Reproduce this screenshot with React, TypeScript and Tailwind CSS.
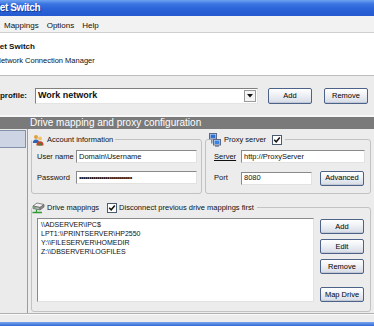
import React from "react";

function AccountIcon() {
  return (
    <svg width="12" height="12" viewBox="0 0 12 12" className="shrink-0">
      <circle cx="4" cy="3" r="2" fill="#e0a040" />
      <path d="M0.8 9 Q0.8 5.4 4 5.4 Q7.2 5.4 7.2 9Z" fill="#2f63b8" />
      <circle cx="8" cy="4.6" r="2" fill="#f2c46a" />
      <path d="M4.4 11.6 Q4.4 7.2 8 7.2 Q11.6 7.2 11.6 11.6Z" fill="#c8402c" />
      <path d="M6 11.6 L8 8.2 L10 11.6Z" fill="#3d8a3a" />
    </svg>
  );
}

function ProxyIcon() {
  return (
    <svg width="12" height="14" viewBox="0 0 12 14" className="shrink-0">
      <rect x="0.5" y="0.5" width="7" height="5.5" fill="#dfe6f2" stroke="#5a6a86" strokeWidth="1" />
      <rect x="1.5" y="1.5" width="5" height="3.5" fill="#2f6fd0" />
      <rect x="4.5" y="6.5" width="7" height="5.5" fill="#dfe6f2" stroke="#5a6a86" strokeWidth="1" />
      <rect x="5.5" y="7.5" width="5" height="3.5" fill="#3b82e6" />
      <rect x="6" y="12.3" width="4" height="1.4" fill="#6a7890" />
      <rect x="2" y="6.5" width="1.5" height="4" fill="#7a88a0" />
    </svg>
  );
}

function DriveIcon() {
  return (
    <svg width="13" height="12" viewBox="0 0 13 12" className="shrink-0">
      <path d="M1 4 L5 1 L12 2.5 L8 5.5Z" fill="#f2f2f2" stroke="#6a6a6a" strokeWidth="0.8" />
      <path d="M1 4 L8 5.5 L8 8 L1 6.5Z" fill="#b8b8b8" stroke="#6a6a6a" strokeWidth="0.8" />
      <path d="M8 5.5 L12 2.5 L12 5 L8 8Z" fill="#8c8c8c" stroke="#6a6a6a" strokeWidth="0.8" />
      <rect x="2" y="5.2" width="1.6" height="1" fill="#3ac03a" />
      <path d="M4.5 7.5 L4.5 10.5 L0.5 10.5 M4.5 10.5 L10 10.5" stroke="#2f9a2f" strokeWidth="1.3" fill="none" />
    </svg>
  );
}

function Check() {
  return (
    <span className="w-[10px] h-[10px] shrink-0 bg-white border border-[#4a5a70] flex items-center justify-center">
      <svg width="8" height="8" viewBox="0 0 8 8">
        <path d="M1.2 3.8 L3.2 5.8 L6.8 1.6" stroke="#111" strokeWidth="1.5" fill="none" />
      </svg>
    </span>
  );
}

function Btn({ children, className = "" }: { children: React.ReactNode; className?: string }) {
  return (
    <div
      className={
        "h-[15px] w-[44px] shrink-0 rounded-[2px] border border-[#4c6288] bg-[linear-gradient(to_bottom,#ffffff_0%,#eef0f5_45%,#d6dbe6_100%)] flex items-center justify-center text-[7.5px] leading-none text-black whitespace-nowrap shadow-[inset_0_-1px_0_#c2c8d6] " +
        className
      }
    >
      {children}
    </div>
  );
}

function Input({ value, className = "" }: { value: string; className?: string }) {
  return (
    <div
      className={
        "h-[13px] bg-white border border-t-[#8a8a8a] border-l-[#8a8a8a] border-b-[#e2e2e2] border-r-[#e2e2e2] flex items-center pl-[2px] text-[7.5px] leading-none whitespace-nowrap overflow-hidden " +
        className
      }
    >
      {value}
    </div>
  );
}

export default function App() {
  return (
    <div className="w-[374px] h-[326px] overflow-hidden bg-[#ececec] flex flex-col font-['Liberation_Sans',Arial,sans-serif] text-[#111]">
      {/* title bar */}
      <div className="h-[16px] shrink-0 bg-[linear-gradient(to_bottom,#6ea2f2_0%,#3a74e0_25%,#2a62d8_60%,#2459cf_100%)] flex items-center overflow-hidden">
        <span className="ml-[-7px] text-[10px] font-bold text-white leading-none whitespace-nowrap tracking-[-0.4px] [text-shadow:1px_1px_0_#143c9a]">
          Net Switch
        </span>
      </div>

      {/* menu bar */}
      <div className="h-[17px] shrink-0 bg-[#f2f2f2] border-b border-[#cfcfcf] flex items-center pt-[3px] pl-[4px] gap-[8px] text-[8px] leading-[10px]">
        <span>Mappings</span>
        <span>Options</span>
        <span>Help</span>
      </div>

      {/* header */}
      <div className="h-[43px] shrink-0 bg-white border-b border-[#bdbdbd] flex flex-col pt-[9px] gap-[4px] overflow-hidden">
        <span className="ml-[-6px] text-[8px] font-bold leading-[10px] whitespace-nowrap">Net Switch</span>
        <span className="ml-[-4.5px] text-[7.5px] leading-[10px] whitespace-nowrap">Network Connection Manager</span>
      </div>

      {/* profile row */}
      <div className="h-[39px] shrink-0 flex items-center">
        <div className="w-[27px] flex justify-end overflow-hidden shrink-0">
          <span className="text-[8px] font-bold whitespace-nowrap leading-none">Network profile:</span>
        </div>
        <div className="ml-[8px] w-[223px] h-[16px] shrink-0 bg-white border border-t-[#808080] border-l-[#808080] border-b-[#e4e4e4] border-r-[#e4e4e4] flex items-center">
          <span className="flex-1 pl-[2px] text-[9px] font-bold leading-none whitespace-nowrap">Work network</span>
          <div className="w-[12px] h-[12px] mr-[1px] bg-[#f4f4f4] border border-[#9a9a9a] flex items-center justify-center">
            <svg width="6" height="4" viewBox="0 0 6 4">
              <path d="M0 0 L6 0 L3 3.5Z" fill="#111" />
            </svg>
          </div>
        </div>
        <Btn className="ml-[10px] w-[42px] h-[16px]">Add</Btn>
        <Btn className="ml-[12px] w-[44px] h-[16px]">Remove</Btn>
      </div>

      {/* section header bar */}
      <div className="h-[14px] shrink-0 border-t-[2px] border-[#f7f7f7] bg-[#7a7a7a] flex items-center pl-[30px] text-[10px] leading-none text-white whitespace-nowrap">
        Drive mapping and proxy configuration
      </div>

      {/* main */}
      <div className="h-[184px] shrink-0 flex">
        <div className="w-[28px] shrink-0 border-r border-[#9c9c9c] bg-[#ebebeb] pt-[1px]">
          <div className="w-[26px] h-[18px] bg-[#cdd4e3] border border-l-0 border-[#8390aa]" />
        </div>

        <div className="flex-1 flex flex-col pl-[3px] pr-[3px] pt-[4px]">
          <div className="flex gap-[3px]">
            {/* account information */}
            <fieldset className="w-[171px] shrink-0 border border-[#c2c2c2] rounded-[3px]">
              <legend className="h-[13px] flex items-center gap-[3px] pr-[2px] text-[7.5px] leading-none whitespace-nowrap">
                <AccountIcon />
                <span>Account information</span>
              </legend>
              <div className="flex flex-col gap-[8px] pt-[4px] pb-[8px] pl-[5px] pr-[4px]">
                <div className="flex items-center">
                  <span className="w-[39px] shrink-0 text-[7.5px] leading-none whitespace-nowrap">User name</span>
                  <Input value="Domain\Username" className="flex-1" />
                </div>
                <div className="flex items-center">
                  <span className="w-[39px] shrink-0 text-[7.5px] leading-none whitespace-nowrap">Password</span>
                  <Input value="••••••••••••••••••••••••••" className="flex-1 text-[5px] tracking-[-0.6px]" />
                </div>
              </div>
            </fieldset>

            {/* proxy server */}
            <fieldset className="flex-1 border border-[#c2c2c2] rounded-[3px]">
              <legend className="ml-[3px] h-[13px] flex items-center pr-[3px] text-[7.5px] leading-none whitespace-nowrap">
                <ProxyIcon />
                <span className="ml-[3px]">Proxy server</span>
                <span className="ml-[6px]">
                  <Check />
                </span>
              </legend>
              <div className="flex flex-col gap-[8px] pt-[4px] pb-[8px] pl-[8px] pr-[5px]">
                <div className="flex items-center">
                  <span className="w-[27px] shrink-0 text-[7.5px] leading-none underline whitespace-nowrap">Server</span>
                  <Input value="http://ProxyServer" className="flex-1" />
                </div>
                <div className="flex items-center h-[14px]">
                  <span className="w-[27px] shrink-0 text-[7.5px] leading-none whitespace-nowrap">Port</span>
                  <Input value="8080" className="w-[71px] shrink-0" />
                  <Btn className="ml-[8px] h-[14px]">Advanced</Btn>
                </div>
              </div>
            </fieldset>
          </div>

          {/* drive mappings */}
          <fieldset className="mt-[7px] border border-[#c2c2c2] rounded-[3px]">
            <legend className="h-[13px] flex items-center pr-[3px] text-[7.5px] leading-none whitespace-nowrap">
              <DriveIcon />
              <span className="ml-[2px]">Drive mappings</span>
              <span className="ml-[8px]">
                <Check />
              </span>
              <span className="ml-[2px]">Disconnect previous drive mappings first</span>
            </legend>
            <div className="flex pt-[4px] pb-[9px] pl-[5px] pr-[4px]">
              <div className="w-[277px] h-[84px] shrink-0 bg-white border border-t-[#8a8a8a] border-l-[#8a8a8a] border-b-[#e2e2e2] border-r-[#e2e2e2] pt-[1px] pl-[3px] text-[7px] leading-[9px] whitespace-nowrap">
                <div>\\ADSERVER\IPC$</div>
                <div>LPT1:\\PRINTSERVER\HP2550</div>
                <div>Y:\\FILESERVER\HOMEDIR</div>
                <div>Z:\\DBSERVER\LOGFILES</div>
              </div>
              <div className="ml-[6px] flex flex-col gap-[5px] pt-[1px]">
                <Btn>Add</Btn>
                <Btn>Edit</Btn>
                <Btn>Remove</Btn>
                <Btn className="mt-[8px]">Map Drive</Btn>
              </div>
            </div>
          </fieldset>
        </div>
      </div>

      {/* footer */}
      <div className="flex-1 border-t border-[#b0b0b0] bg-[#ececec] flex flex-col">
        <div className="flex-1 border-t border-[#fafafa]" />
        <div className="h-[4px] bg-[linear-gradient(to_bottom,#7aa6ee,#3169d6)]" />
      </div>
    </div>
  );
}
